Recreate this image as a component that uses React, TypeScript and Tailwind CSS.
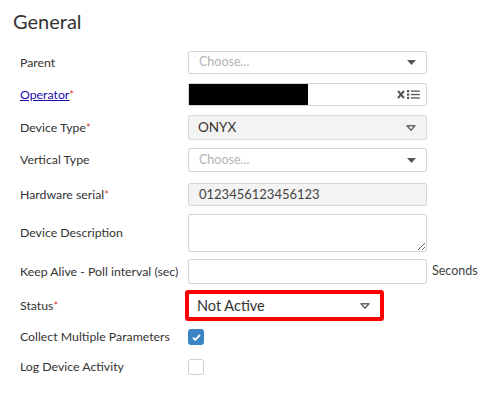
import React from 'react';

const font = { fontFamily: 'Lato, "Open Sans", sans-serif' };

// Solid caret used by the searchable selects
const SolidCaret = () => (
  <svg width="9" height="5" viewBox="0 0 9 5" className="text-[#555]">
    <path d="M0 0h9L4.5 5z" fill="currentColor" />
  </svg>
);

// Hollow caret used by the plain selects
const HollowCaret = () => (
  <svg width="10" height="6" viewBox="0 0 10 6" className="text-[#666]">
    <path d="M1 0.8h8L5 5.2z" fill="none" stroke="currentColor" strokeWidth="1.4" strokeLinejoin="round" />
  </svg>
);

const ClearListIcon = () => (
  <svg width="24" height="11" viewBox="0 0 24 11" className="text-[#555]">
    <path d="M1 2l6 7M7 2l-6 7" stroke="currentColor" strokeWidth="2" />
    <rect x="10" y="1" width="2.2" height="2.2" fill="currentColor" />
    <rect x="10" y="4.4" width="2.2" height="2.2" fill="currentColor" />
    <rect x="10" y="7.8" width="2.2" height="2.2" fill="currentColor" />
    <rect x="13.8" y="1.5" width="9" height="1.3" fill="currentColor" />
    <rect x="13.8" y="4.9" width="9" height="1.3" fill="currentColor" />
    <rect x="13.8" y="8.3" width="9" height="1.3" fill="currentColor" />
  </svg>
);

const Req = () => <span className="text-[#e0433b] text-[11px] align-top">*</span>;

const Row: React.FC<{ label: React.ReactNode; className?: string; children: React.ReactNode }> = ({
  label,
  className = '',
  children,
}) => (
  <div className={`flex items-center ${className}`}>
    <div className="w-[188px] shrink-0 whitespace-nowrap pl-5 text-[12.3px] leading-[16px] text-[#333]">{label}</div>
    {children}
  </div>
);

export default function App() {
  return (
    <div className="w-[491px] h-[405px] bg-white" style={font}>
      <h2 className="pl-[13px] pt-[8px] text-[20px] leading-[26px] text-[#333]">General</h2>

      <Row label="Parent" className="mt-[17px]">
        <div className="flex h-[23px] w-[239px] items-center justify-between rounded-[2px] border border-[#d5d5d5] bg-white pl-[10px] pr-[10px]">
          <span className="text-[12.5px] text-[#b3b3b3]">Choose...</span>
          <SolidCaret />
        </div>
      </Row>

      <Row
        label={
          <>
            <span className="text-[#1a0dab] underline">Operator</span>
            <Req />
          </>
        }
        className="mt-[9px]"
      >
        <div className="flex h-[23px] w-[239px] items-center justify-between rounded-[2px] border border-[#d5d5d5] bg-white pr-[5px]">
          <div className="h-full w-[119px] bg-black" />
          <ClearListIcon />
        </div>
      </Row>

      <Row
        label={
          <>
            Device Type
            <Req />
          </>
        }
        className="mt-[9px]"
      >
        <div className="flex h-[25px] w-[239px] items-center justify-between rounded-[2px] border border-[#dcdcdc] bg-[#f3f3f3] pl-[9px] pr-[10px]">
          <span className="text-[13.5px] text-[#333]">ONYX</span>
          <HollowCaret />
        </div>
      </Row>

      <Row label="Vertical Type" className="mt-[8px]">
        <div className="flex h-[24px] w-[239px] items-center justify-between rounded-[2px] border border-[#d5d5d5] bg-white pl-[10px] pr-[10px]">
          <span className="text-[12.5px] text-[#b3b3b3]">Choose...</span>
          <SolidCaret />
        </div>
      </Row>

      <Row
        label={
          <>
            Hardware serial
            <Req />
          </>
        }
        className="mt-[11px]"
      >
        <div className="flex h-[23px] w-[239px] items-center rounded-[2px] border border-[#d5d5d5] bg-[#f3f3f3] pl-[10px]">
          <span className="text-[13px] text-[#444]">0123456123456123</span>
        </div>
      </Row>

      <Row label="Device Description" className="mt-[8px]">
        <textarea className="block h-[38px] w-[239px] rounded-[2px] border border-[#d5d5d5] bg-white" />
      </Row>

      <Row label="Keep Alive - Poll interval (sec)" className="mt-[7px]">
        <div className="h-[25px] w-[239px] rounded-[2px] border border-[#d5d5d5] bg-white" />
        <span className="ml-[5px] text-[12.5px] text-[#444]">Seconds</span>
      </Row>

      <Row
        label={
          <>
            Status
            <Req />
          </>
        }
        className="mt-[6px]"
      >
        <div className="-ml-[3px] flex h-[31px] w-[199px] items-center justify-between rounded-[3px] border-[4px] border-[#ff0000] bg-white pl-[8px] pr-[10px]">
          <span className="text-[14.5px] text-[#333]">Not Active</span>
          <HollowCaret />
        </div>
      </Row>

      <Row label="Collect Multiple Parameters" className="mt-[8px] h-[16px]">
        <div className="flex h-[16px] w-[16px] items-center justify-center rounded-[3px] bg-[#3d85c6]">
          <svg width="9" height="7" viewBox="0 0 9 7">
            <path d="M1 3.6l2.3 2.2L8 1" fill="none" stroke="white" strokeWidth="1.8" />
          </svg>
        </div>
      </Row>

      <Row label="Log Device Activity" className="mt-[14px] h-[16px]">
        <div className="h-[16px] w-[16px] rounded-[3px] border border-[#cfcfcf] bg-white" />
      </Row>
    </div>
  );
}
